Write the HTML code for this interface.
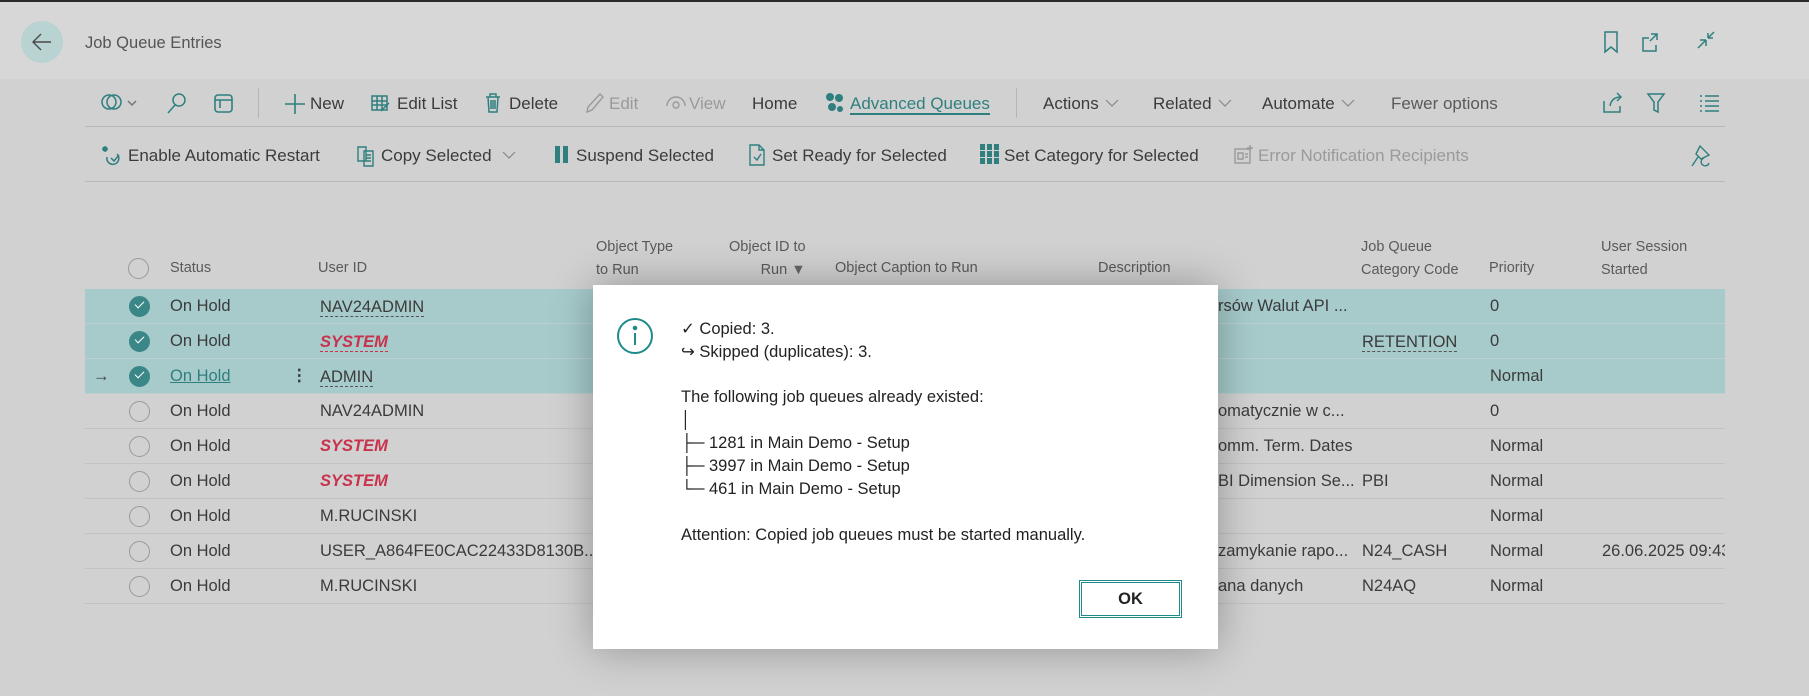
<!DOCTYPE html>
<html><head><meta charset="utf-8"><style>
*{margin:0;padding:0;box-sizing:border-box}
body{width:1809px;height:696px;overflow:hidden;background:#d1d1d1;font-family:"Liberation Sans",sans-serif;color:#3b3b3b;position:relative}
.a{position:absolute;white-space:nowrap}
.t{font-size:17px;line-height:20px}
.hd{font-size:14.5px;color:#5a5a5a;line-height:23px}
.row{position:absolute;left:85px;width:1640px;height:35px;border-bottom:1px solid #c3c3c3}
.sel{background:#a7cbcb;border-bottom:1px solid #bcd2d2}
.c{font-size:16.5px;line-height:35px;position:absolute;top:0;white-space:nowrap}
.cb{position:absolute;left:44px;top:7px;width:21px;height:21px;border-radius:50%;border:1.5px solid #9a9a9a}
.cbs{background:#3b8787;border-color:#3b8787}
.cbs::after{content:"";position:absolute;left:5px;top:4px;width:8px;height:4px;border-left:1.6px solid #fff;border-bottom:1.6px solid #fff;transform:rotate(-45deg)}
.sys{color:#c8324c;font-weight:bold;font-style:italic}
.du{border-bottom:1.5px dashed #555;line-height:18px;top:9px}
.sys.du{border-color:#c8324c}
.chev{display:inline-block;margin-left:6px;vertical-align:2px}
</style></head><body>
<div class="a" style="left:0;top:0;width:1809px;height:2px;background:#2a2a2a"></div>
<div class="a" style="left:0;top:2px;width:1809px;height:77px;background:#d7d7d7"></div>
<div class="a" style="left:21px;top:21px;width:42px;height:42px;border-radius:50%;background:#b9d2d2"></div>
<svg class="a" style="left:30px;top:31px" width="24" height="22" viewBox="0 0 24 22"><path d="M21 11H4M11 3L3 11l8 8" fill="none" stroke="#4a4a4a" stroke-width="1.4"/></svg>
<div class="a" style="left:85px;top:34px;font-size:16.5px;color:#555">Job Queue Entries</div>
<svg class="a" style="left:1602px;top:30px" width="120" height="26" viewBox="0 0 120 26" fill="none" stroke="#2f7f7f" stroke-width="1.5"><path d="M3 2h12v20l-6-5-6 5z"/><path d="M47 8h-6v13h13v-6M49 4h6v6M55 4l-7 7"/><path d="M96 18l8-8M104 10v6M104 10h-6M112 2l-6 6M106 8V3M106 8h5"/></svg>

<svg class="a" style="left:100px;top:92px" width="48" height="22" viewBox="0 0 48 22" fill="none" stroke="#2f7f7f" stroke-width="1.5"><circle cx="9" cy="10" r="7"/><circle cx="14" cy="10" r="7"/><path d="M28 9l4 4 4-4" stroke="#777"/></svg>
<svg class="a" style="left:166px;top:92px" width="22" height="24" viewBox="0 0 22 24" fill="none" stroke="#2f7f7f" stroke-width="1.5"><circle cx="13" cy="8" r="6"/><path d="M9 13L2 21"/></svg>
<svg class="a" style="left:213px;top:93px" width="22" height="22" viewBox="0 0 22 22" fill="none" stroke="#2f7f7f" stroke-width="1.6"><rect x="2" y="2" width="17" height="17" rx="3"/><path d="M2 7h17M7 7v8"/></svg>
<div class="a" style="left:258px;top:88px;width:1px;height:30px;background:#b5b5b5"></div>
<svg class="a" style="left:284px;top:93px" width="22" height="22" viewBox="0 0 22 22" stroke="#2f7f7f" stroke-width="1.6"><path d="M11 1v20M1 11h20"/></svg>
<div class="a t" style="left:310px;top:94px">New</div>
<svg class="a" style="left:371px;top:94px" width="20" height="20" viewBox="0 0 20 20" fill="none" stroke="#2f7f7f" stroke-width="1.5"><rect x="1" y="2" width="15" height="14"/><path d="M1 7h15M1 11h15M6 2v14M11 2v14M10 17l8-8"/></svg>
<div class="a t" style="left:397px;top:94px">Edit List</div>
<svg class="a" style="left:485px;top:92px" width="16" height="22" viewBox="0 0 16 22" fill="none" stroke="#2f7f7f" stroke-width="1.5"><path d="M1 5h14M5 5V2h6v3M3 5l1 15h8l1-15M6 8v9M8 8v9M10 8v9"/></svg>
<div class="a t" style="left:509px;top:94px">Delete</div>
<svg class="a" style="left:585px;top:92px" width="20" height="22" viewBox="0 0 20 22" fill="none" stroke="#9a9a9a" stroke-width="1.4"><path d="M15 2l3 3L7 18l-5 2 1-5z"/></svg>
<div class="a t" style="left:609px;top:94px;color:#9a9a9a">Edit</div>
<svg class="a" style="left:665px;top:94px" width="22" height="16" viewBox="0 0 22 16" fill="none" stroke="#9a9a9a" stroke-width="1.4"><path d="M2 12a9 9 0 0 1 18 0"/><circle cx="11" cy="11" r="3"/></svg>
<div class="a t" style="left:689px;top:94px;color:#9a9a9a">View</div>
<div class="a t" style="left:752px;top:94px">Home</div>
<svg class="a" style="left:825px;top:92px" width="20" height="22" viewBox="0 0 20 22" fill="#2f7f7f"><circle cx="5" cy="5" r="4"/><circle cx="14" cy="6" r="4"/><circle cx="7" cy="15" r="4"/><circle cx="15" cy="17" r="3"/></svg>
<div class="a t" style="left:850px;top:94px;color:#2f7f7f">Advanced Queues</div>
<div class="a" style="left:850px;top:113px;width:140px;height:2px;background:#2f7f7f"></div>
<div class="a" style="left:1016px;top:88px;width:1px;height:30px;background:#b5b5b5"></div>
<div class="a t" style="left:1043px;top:94px">Actions<svg class="chev" width="14" height="8" viewBox="0 0 14 8"><path d="M1 1l6 6 6-6" fill="none" stroke="#888" stroke-width="1.2"/></svg></div>
<div class="a t" style="left:1153px;top:94px">Related<svg class="chev" width="14" height="8" viewBox="0 0 14 8"><path d="M1 1l6 6 6-6" fill="none" stroke="#888" stroke-width="1.2"/></svg></div>
<div class="a t" style="left:1262px;top:94px">Automate<svg class="chev" width="14" height="8" viewBox="0 0 14 8"><path d="M1 1l6 6 6-6" fill="none" stroke="#888" stroke-width="1.2"/></svg></div>
<div class="a t" style="left:1391px;top:94px;color:#5a5a5a">Fewer options</div>
<svg class="a" style="left:1602px;top:91px" width="120" height="24" viewBox="0 0 120 24" fill="none" stroke="#2f7f7f" stroke-width="1.5"><path d="M2 10v11h16v-6M8 15c1-6 5-9 11-9M15 2l4 4-4 4"/><path d="M46 3h16l-6 8v10l-4-2v-8z"/><path d="M98 5h2M98 10h2M98 15h2M98 20h2M103 5h14M103 10h14M103 15h14M103 20h14"/></svg>
<div class="a" style="left:85px;top:126px;width:1640px;height:1px;background:#b9b9b9"></div>

<svg class="a" style="left:101px;top:144px" width="20" height="24" viewBox="0 0 20 24" fill="none" stroke="#2f7f7f" stroke-width="1.5"><path d="M4 2v6M1 5h6M2 3l4 4M6 3l-4 4M6 13a6 6 0 1 0 10-3M10 14l3 3 5-6"/></svg>
<div class="a t" style="left:128px;top:146px">Enable Automatic Restart</div>
<svg class="a" style="left:356px;top:145px" width="22" height="22" viewBox="0 0 22 22" fill="none" stroke="#2f7f7f" stroke-width="1.4"><path d="M2 2h8v14H2zM8 6h9v15H8zM10 10h5M10 13h5M10 16h5"/></svg>
<div class="a t" style="left:381px;top:146px">Copy Selected<svg class="chev" style="margin-left:10px" width="14" height="8" viewBox="0 0 14 8"><path d="M1 1l6 6 6-6" fill="none" stroke="#888" stroke-width="1.2"/></svg></div>
<div class="a" style="left:555px;top:146px;width:5px;height:17px;background:#2f7f7f"></div>
<div class="a" style="left:563px;top:146px;width:5px;height:17px;background:#2f7f7f"></div>
<div class="a t" style="left:576px;top:146px">Suspend Selected</div>
<svg class="a" style="left:748px;top:143px" width="18" height="24" viewBox="0 0 18 24" fill="none" stroke="#2f7f7f" stroke-width="1.4"><path d="M2 2h9l5 5v15H2zM11 2v5h5M6 14l3 3 4-6"/></svg>
<div class="a t" style="left:772px;top:146px">Set Ready for Selected</div>
<svg class="a" style="left:980px;top:144px" width="20" height="20" viewBox="0 0 20 20" fill="#2f7f7f"><rect x="0" y="0" width="5" height="20"/><rect x="7" y="0" width="5" height="20"/><rect x="14" y="0" width="5" height="20"/><path d="M0 6h20v1H0zM0 13h20v1H0z" fill="#d1d1d1"/></svg>
<div class="a t" style="left:1004px;top:146px">Set Category for Selected</div>
<svg class="a" style="left:1234px;top:144px" width="20" height="22" viewBox="0 0 20 22" fill="none" stroke="#9a9a9a" stroke-width="1.4"><rect x="1" y="5" width="15" height="14"/><path d="M4 9h5v6H4zM11 10h3M11 13h3M16 1v6M13 4h6"/></svg>
<div class="a t" style="left:1258px;top:146px;color:#9a9a9a">Error Notification Recipients</div>
<svg class="a" style="left:1690px;top:144px" width="22" height="24" viewBox="0 0 22 24" fill="none" stroke="#2f7f7f" stroke-width="1.4"><path d="M10 2l-4 8 5 5 8-4zM8 13l-6 9M14 14a4 4 0 1 0 5 5"/></svg>
<div class="a" style="left:85px;top:181px;width:1640px;height:1px;background:#b9b9b9"></div>

<div class="a" style="left:128px;top:258px;width:21px;height:21px;border-radius:50%;border:1.5px solid #9a9a9a"></div>
<div class="a hd" style="left:170px;top:257px">Status</div>
<div class="a hd" style="left:318px;top:257px">User ID</div>
<div class="a hd" style="left:596px;top:236px">Object Type<br>to Run</div>
<div class="a hd" style="left:729px;top:236px;text-align:right">Object ID to<br>Run <span style="color:#666">&#9660;</span></div>
<div class="a hd" style="left:835px;top:257px">Object Caption to Run</div>
<div class="a hd" style="left:1098px;top:257px">Description</div>
<div class="a hd" style="left:1361px;top:236px">Job Queue<br>Category Code</div>
<div class="a hd" style="left:1489px;top:257px">Priority</div>
<div class="a hd" style="left:1601px;top:236px">User Session<br>Started</div>

<div class="row sel" style="top:289px"><div class="cb cbs"></div><span class="c" style="left:85px">On Hold</span><span class="c du" style="left:235px">NAV24ADMIN</span><span class="c" style="left:1133px">rsów Walut API ...</span><span class="c" style="left:1405px">0</span></div>
<div class="row sel" style="top:324px"><div class="cb cbs"></div><span class="c" style="left:85px">On Hold</span><span class="c sys du" style="left:235px">SYSTEM</span><span class="c du" style="left:1277px">RETENTION</span><span class="c" style="left:1405px">0</span></div>
<div class="row sel" style="top:359px"><span class="c" style="left:8px;color:#444">&#8594;</span><div class="cb cbs"></div><span class="c" style="left:85px;color:#2f7f7f;text-decoration:underline">On Hold</span><span class="c" style="left:206px;font-weight:bold">&#8942;</span><span class="c du" style="left:235px">ADMIN</span><span class="c" style="left:1405px">Normal</span></div>
<div class="row" style="top:394px"><div class="cb"></div><span class="c" style="left:85px">On Hold</span><span class="c" style="left:235px">NAV24ADMIN</span><span class="c" style="left:1133px">omatycznie w c...</span><span class="c" style="left:1405px">0</span></div>
<div class="row" style="top:429px"><div class="cb"></div><span class="c" style="left:85px">On Hold</span><span class="c sys" style="left:235px">SYSTEM</span><span class="c" style="left:1133px">omm. Term. Dates</span><span class="c" style="left:1405px">Normal</span></div>
<div class="row" style="top:464px"><div class="cb"></div><span class="c" style="left:85px">On Hold</span><span class="c sys" style="left:235px">SYSTEM</span><span class="c" style="left:1133px">BI Dimension Se...</span><span class="c" style="left:1277px">PBI</span><span class="c" style="left:1405px">Normal</span></div>
<div class="row" style="top:499px"><div class="cb"></div><span class="c" style="left:85px">On Hold</span><span class="c" style="left:235px">M.RUCINSKI</span><span class="c" style="left:1405px">Normal</span></div>
<div class="row" style="top:534px"><div class="cb"></div><span class="c" style="left:85px">On Hold</span><span class="c" style="left:235px">USER_A864FE0CAC22433D8130B...</span><span class="c" style="left:1133px">zamykanie rapo...</span><span class="c" style="left:1277px">N24_CASH</span><span class="c" style="left:1405px">Normal</span><span class="c" style="left:1517px;width:123px;overflow:hidden">26.06.2025 09:43</span></div>
<div class="row" style="top:569px"><div class="cb"></div><span class="c" style="left:85px">On Hold</span><span class="c" style="left:235px">M.RUCINSKI</span><span class="c" style="left:1133px">ana danych</span><span class="c" style="left:1277px">N24AQ</span><span class="c" style="left:1405px">Normal</span></div>

<div class="a" style="left:593px;top:285px;width:625px;height:364px;background:#fff;box-shadow:0 0 40px rgba(0,0,0,.3);color:#222;font-size:16.5px">
 <svg class="a" style="left:23px;top:32px" width="38" height="38" viewBox="0 0 38 38" fill="none" stroke="#1f8a8a" stroke-width="2"><circle cx="19" cy="19" r="17"/><path d="M19 16v12" /><circle cx="19" cy="11" r="1.3" fill="#1f8a8a"/></svg>
 <div class="a" style="left:88px;top:33px;line-height:23px">✓ Copied: 3.<br>↪ Skipped (duplicates): 3.</div>
 <div class="a" style="left:88px;top:101px;line-height:23px">The following job queues already existed:<br>│<br>├─ 1281 in Main Demo - Setup<br>├─ 3997 in Main Demo - Setup<br>└─ 461 in Main Demo - Setup</div>
 <div class="a" style="left:88px;top:239px;line-height:23px">Attention: Copied job queues must be started manually.</div>
 <div class="a" style="left:486px;top:295px;width:103px;height:38px;border:1px solid #1f8a8a;box-shadow:inset 0 0 0 1px #fff,inset 0 0 0 2px #1f8a8a;text-align:center;line-height:36px;font-size:16.5px;font-weight:bold;color:#222">OK</div>
</div>
</body></html>
